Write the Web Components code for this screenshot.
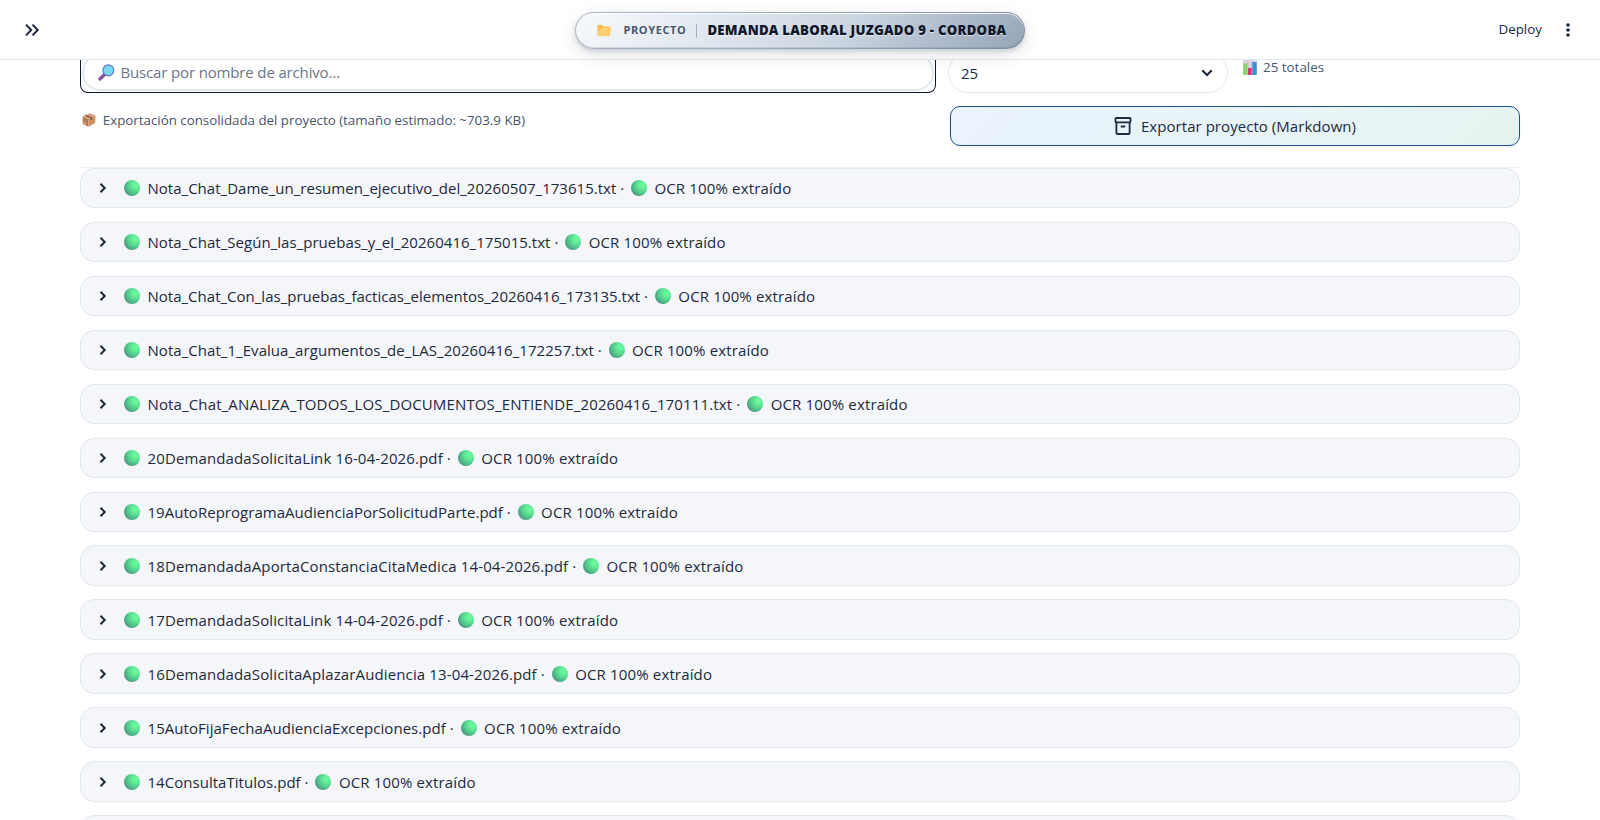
<!DOCTYPE html>
<html lang="es">
<head>
<meta charset="utf-8">
<title>Proyecto</title>
<style>
    html, body {
        margin: 0;
        height: 100%;
        overflow: hidden;
    }
    body {
        background: #ffffff;
        color: #1e293b;
        font-family: "Open Sans", "Noto Sans", sans-serif;
        font-size: 15px;
    }
</style>
</head>
<body>
<project-page></project-page>

<script>
const icons = {
    expand: '<svg width="16" height="14" viewBox="0 0 16 14" fill="none" stroke="#1e293b" stroke-width="2"><path d="M2 1.6 7.2 7 2 12.4M8.5 1.6 13.7 7 8.5 12.4"/></svg>',
    chevron: '<svg width="8" height="12" viewBox="0 0 8 12" fill="none" stroke="#1e293b" stroke-width="2"><path d="M1.5 1.8 5.7 6 1.5 10.2"/></svg>',
    down: '<svg width="12" height="8" viewBox="0 0 12 8" fill="none" stroke="#1e293b" stroke-width="2.1"><path d="M1.2 1.3 6 6.1 10.8 1.3"/></svg>',
    dots: '<svg width="4" height="16" viewBox="0 0 4 16" fill="#1e293b"><circle cx="2" cy="3" r="1.8"/><circle cx="2" cy="8" r="1.8"/><circle cx="2" cy="13" r="1.8"/></svg>',
    ball: '<svg width="16" height="16" viewBox="0 0 16 16"><defs><radialGradient id="b" cx=".72" cy=".32" r=".78"><stop offset="0" stop-color="#6dfb9f"/><stop offset=".3" stop-color="#64ec98"/><stop offset=".65" stop-color="#52c98b"/><stop offset="1" stop-color="#4c9483"/></radialGradient></defs><circle cx="8" cy="8" r="8" fill="url(#b)"/></svg>',
    folder: '<svg width="15" height="13" viewBox="0 0 15 13"><path d="M.5 1.8Q.5.8 1.5.8H5L6.6 2.4H11.8Q12.8 2.4 12.8 3.4V11H.5Z" fill="#f9bd51"/><path d="M4.4 3.8H13.6Q14.7 3.8 14.4 4.8L13 11.2Q12.7 12.2 11.7 12.2H1.4Q.3 12.2.5 11.2L1.6 6.6H3.2Z" fill="#ffcf72"/></svg>',
    search: '<svg width="17" height="17" viewBox="0 0 17 17"><path d="M2 15 6 11" stroke="#8b5299" stroke-width="3.4" stroke-linecap="round"/><path d="M6 11 7.4 9.6" stroke="#675a93" stroke-width="2"/><circle cx="10.3" cy="6.4" r="5.4" fill="#78d8f2" stroke="#6a7fc0" stroke-width="1.3"/></svg>',
    box: '<svg width="14" height="14" viewBox="0 0 14 14"><path d="M.5 3.5 7.5.3 13.5 2.6 6.3 6Z" fill="#d9a27b"/><path d="M.5 3.5 6.3 6V13.7L.9 10.9Z" fill="#b67c57"/><path d="M6.3 6 13.5 2.6 13.2 9.9 6.3 13.7Z" fill="#d1915f"/><path d="M3.5 2.1 10 4.2V7L8.6 7.8V5L2.2 2.7Z" fill="#7d5347"/><path d="M2 9 4 10V11.5L2 10.5Z" fill="#dcb49b"/></svg>',
    chart: '<svg width="14" height="15" viewBox="0 0 14 15"><path d="M0 0H14V15H0Z" fill="#dcd5e2"/><path d="M0 4H14M0 8H14M4.7 0V15M9.3 0V15" stroke="#c2b9cb" stroke-width=".6"/><path d="M.3 3.5H4.3V15H.3Z" fill="#87d763"/><path d="M5 8H8.7V15H5Z" fill="#d63279"/><path d="M9.3 2H13.7V15H9.3Z" fill="#3d8fd6"/></svg>',
    archive: '<svg width="18" height="18" viewBox="0 0 18 18" fill="none" stroke="#1e293b" stroke-width="1.8"><rect x="1.5" y="1" width="15" height="4.3" rx=".7"/><path d="M2.4 5.3V16Q2.4 17 3.4 17H14.6Q15.6 17 15.6 16V5.3M6.8 9.5H11.2"/></svg>'
};

class UiIcon extends HTMLElement {
    constructor() {
        super();
        this.attachShadow({ mode: 'open' });
    }

    connectedCallback() {
        this.shadowRoot.innerHTML = `
            <style>
                :host { display: inline-flex; flex: none; }
                svg { display: block; }
            </style>
            ${icons[this.getAttribute('name')]}
        `;
    }
}

class ProjectBadge extends HTMLElement {
    constructor() {
        super();
        this.attachShadow({ mode: 'open' });
    }

    connectedCallback() {
        this.shadowRoot.innerHTML = `
            <style>
                :host {
                    display: flex;
                    align-items: center;
                    box-sizing: border-box;
                    width: 450px;
                    height: 37px;
                    padding: 0 0 0 21px;
                    border: 1px solid rgba(100, 116, 139, 0.5);
                    border-radius: 19px;
                    background: linear-gradient(135deg, #f8fafc 0%, #e2e8f0 30%, #cbd5e1 60%, #94a3b8 100%) border-box;
                    box-shadow: 0 6px 18px rgba(15, 23, 42, 0.12), 0 2px 4px rgba(15, 23, 42, 0.14),
                        inset 0 1px 0 rgba(255, 255, 255, 0.85), inset 0 -1px 0 rgba(71, 85, 105, 0.15);
                    white-space: nowrap;
                }
                .label {
                    margin: -2px 0 0 11.5px;
                    font-size: 11px;
                    font-weight: 700;
                    letter-spacing: 0.6px;
                    color: #475569;
                }
                .line {
                    width: 1px;
                    height: 14px;
                    margin: 0 10px;
                    background: #a5b0c0;
                }
                .title {
                    margin-top: -2px;
                    font-size: 13.2px;
                    font-weight: 800;
                    letter-spacing: 0.25px;
                    color: #0f172a;
                    text-shadow: 0 1px 0 rgba(255, 255, 255, 0.6);
                }
            </style>
            <ui-icon name="folder"></ui-icon>
            <span class="label">PROYECTO</span>
            <span class="line"></span>
            <span class="title"><slot></slot></span>
        `;
    }
}

class AppHeader extends HTMLElement {
    constructor() {
        super();
        this.attachShadow({ mode: 'open' });
    }

    connectedCallback() {
        this.shadowRoot.innerHTML = `
            <style>
                :host {
                    display: grid;
                    grid-template-columns: 1fr auto 1fr;
                    align-items: center;
                    box-sizing: border-box;
                    flex: none;
                    height: 60px;
                    padding: 0 30px 0 24px;
                    border-bottom: 1px solid #e2e8f0;
                    background: #ffffff;
                    position: relative;
                    z-index: 1;
                }
                project-badge { margin: 2px -3px 0 3px; }
                .actions {
                    display: flex;
                    justify-content: flex-end;
                    align-items: center;
                    gap: 24px;
                    font-size: 13.4px;
                }
                .actions span { margin-top: -2px; }
            </style>
            <ui-icon name="expand"></ui-icon>
            <project-badge>DEMANDA LABORAL JUZGADO 9 - CORDOBA</project-badge>
            <div class="actions"><span>Deploy</span><ui-icon name="dots"></ui-icon></div>
        `;
    }
}

class SearchBar extends HTMLElement {
    constructor() {
        super();
        this.attachShadow({ mode: 'open' });
    }

    connectedCallback() {
        this.shadowRoot.innerHTML = `
            <style>
                :host {
                    display: flex;
                    align-items: flex-start;
                    height: 33px;
                }
                .field {
                    box-sizing: border-box;
                    width: 856px;
                    height: 33px;
                    padding: 0 1px 1px;
                    border: 1px solid #0f172a;
                    border-top: 0;
                    border-radius: 0 0 8px 8px;
                    overflow: hidden;
                }
                .inner {
                    display: flex;
                    align-items: center;
                    gap: 5.5px;
                    box-sizing: border-box;
                    height: 37px;
                    margin-top: -6px;
                    padding: 0 14px;
                    border: 2px solid #e2e8f0;
                    border-radius: 19px;
                    color: #6b7688;
                    letter-spacing: -0.15px;
                }
                .inner span { margin-top: -2px; }
                .select {
                    display: flex;
                    align-items: center;
                    justify-content: space-between;
                    box-sizing: border-box;
                    width: 280px;
                    height: 40px;
                    margin: -7px 0 0 12px;
                    padding: 0 14px 0 12px;
                    border: 1px solid #e2e8f0;
                    border-radius: 20px;
                }
                .total {
                    display: flex;
                    align-items: center;
                    gap: 6px;
                    height: 14px;
                    margin-left: 15px;
                    color: #475569;
                    font-size: 13.4px;
                    line-height: 14px;
                }
            </style>
            <div class="field"><div class="inner"><ui-icon name="search"></ui-icon><span>Buscar por nombre de archivo…</span></div></div>
            <div class="select"><span>25</span><ui-icon name="down"></ui-icon></div>
            <div class="total"><ui-icon name="chart"></ui-icon><span>25 totales</span></div>
        `;
    }
}

class ExportBar extends HTMLElement {
    constructor() {
        super();
        this.attachShadow({ mode: 'open' });
    }

    connectedCallback() {
        this.shadowRoot.innerHTML = `
            <style>
                :host {
                    display: flex;
                    justify-content: space-between;
                    align-items: flex-start;
                    margin-top: 13px;
                    height: 61px;
                    border-bottom: 1px solid #f1f3f6;
                }
                .note {
                    display: flex;
                    align-items: center;
                    gap: 6.5px;
                    height: 28px;
                    padding-left: 2.3px;
                    font-size: 13.32px;
                    color: #475569;
                }
                button {
                    display: flex;
                    align-items: center;
                    justify-content: center;
                    gap: 9px;
                    box-sizing: border-box;
                    width: 570px;
                    height: 40px;
                    padding: 0;
                    border: 1px solid #1d4f91;
                    border-radius: 10px;
                    background: linear-gradient(135deg, #eaf3ff, #e6f4f0);
                    box-shadow: 0 1px 3px rgba(15, 23, 42, 0.06);
                    font: inherit;
                    letter-spacing: 0.05px;
                    color: inherit;
                }
            </style>
            <div class="note"><ui-icon name="box"></ui-icon><span>Exportación consolidada del proyecto (tamaño estimado: ~703.9 KB)</span></div>
            <button><ui-icon name="archive"></ui-icon><span>Exportar proyecto (Markdown)</span></button>
        `;
    }
}

class FileRow extends HTMLElement {
    constructor() {
        super();
        this.attachShadow({ mode: 'open' });
    }

    connectedCallback() {
        this.shadowRoot.innerHTML = `
            <style>
                :host {
                    display: flex;
                    align-items: center;
                    box-sizing: border-box;
                    flex: none;
                    height: 40.4px;
                    padding: 0.5px 18px 0;
                    border: 1px solid #e2e8f0;
                    border-radius: 14px;
                    background: #f4f6fa;
                    white-space: pre;
                }
                .first { margin: 0 7.5px 0 17px; }
                .second { margin: 0 7.5px 0 6.8px; }
                .name { letter-spacing: ${this.getAttribute('tracking')}px; }
                .status { letter-spacing: 0.15px; }
            </style>
            <ui-icon name="chevron"></ui-icon>
            <ui-icon class="first" name="ball"></ui-icon>
            <span class="name"><slot></slot> ·</span>
            <ui-icon class="second" name="ball"></ui-icon>
            <span class="status">OCR 100% extraído</span>
        `;
    }
}

class ProjectPage extends HTMLElement {
    constructor() {
        super();
        this.attachShadow({ mode: 'open' });
    }

    connectedCallback() {
        // name, letter spacing
        const files = [
            ['Nota_Chat_Dame_un_resumen_ejecutivo_del_20260507_173615.txt', 0.016],
            ['Nota_Chat_Según_las_pruebas_y_el_20260416_175015.txt', 0.034],
            ['Nota_Chat_Con_las_pruebas_facticas_elementos_20260416_173135.txt', 0.01],
            ['Nota_Chat_1_Evalua_argumentos_de_LAS_20260416_172257.txt', 0.05],
            ['Nota_Chat_ANALIZA_TODOS_LOS_DOCUMENTOS_ENTIENDE_20260416_170111.txt', 0.14],
            ['20DemandadaSolicitaLink 16-04-2026.pdf', 0.125],
            ['19AutoReprogramaAudienciaPorSolicitudParte.pdf', 0.032],
            ['18DemandadaAportaConstanciaCitaMedica 14-04-2026.pdf', 0.123],
            ['17DemandadaSolicitaLink 14-04-2026.pdf', 0.125],
            ['16DemandadaSolicitaAplazarAudiencia 13-04-2026.pdf', 0.13],
            ['15AutoFijaFechaAudienciaExcepciones.pdf', 0.05],
            ['14ConsultaTitulos.pdf', 0.03]
        ];

        this.shadowRoot.innerHTML = `
            <style>
                :host {
                    display: flex;
                    flex-direction: column;
                    height: 100vh;
                }
                /* the scrolled content runs on under the header */
                main {
                    flex: 1;
                    min-height: 0;
                    overflow: hidden;
                    margin-top: -20px;
                    padding: 20px 80px 0;
                }
                .files {
                    display: flex;
                    flex-direction: column;
                    gap: 13.54px;
                }
                .next {
                    flex: none;
                    height: 40px;
                    box-sizing: border-box;
                    border: 1px solid #e2e8f0;
                    border-radius: 14px;
                    background: #f4f6fa;
                }
            </style>
            <app-header></app-header>
            <main>
                <search-bar></search-bar>
                <export-bar></export-bar>
                <div class="files">
                    ${files.map(([name, tracking]) => `<file-row tracking="${tracking}">${name}</file-row>`).join('')}
                    <div class="next"></div>
                </div>
            </main>
        `;
    }
}

customElements.define('ui-icon', UiIcon);
customElements.define('project-badge', ProjectBadge);
customElements.define('app-header', AppHeader);
customElements.define('search-bar', SearchBar);
customElements.define('export-bar', ExportBar);
customElements.define('file-row', FileRow);
customElements.define('project-page', ProjectPage);
</script>
</body>
</html>
